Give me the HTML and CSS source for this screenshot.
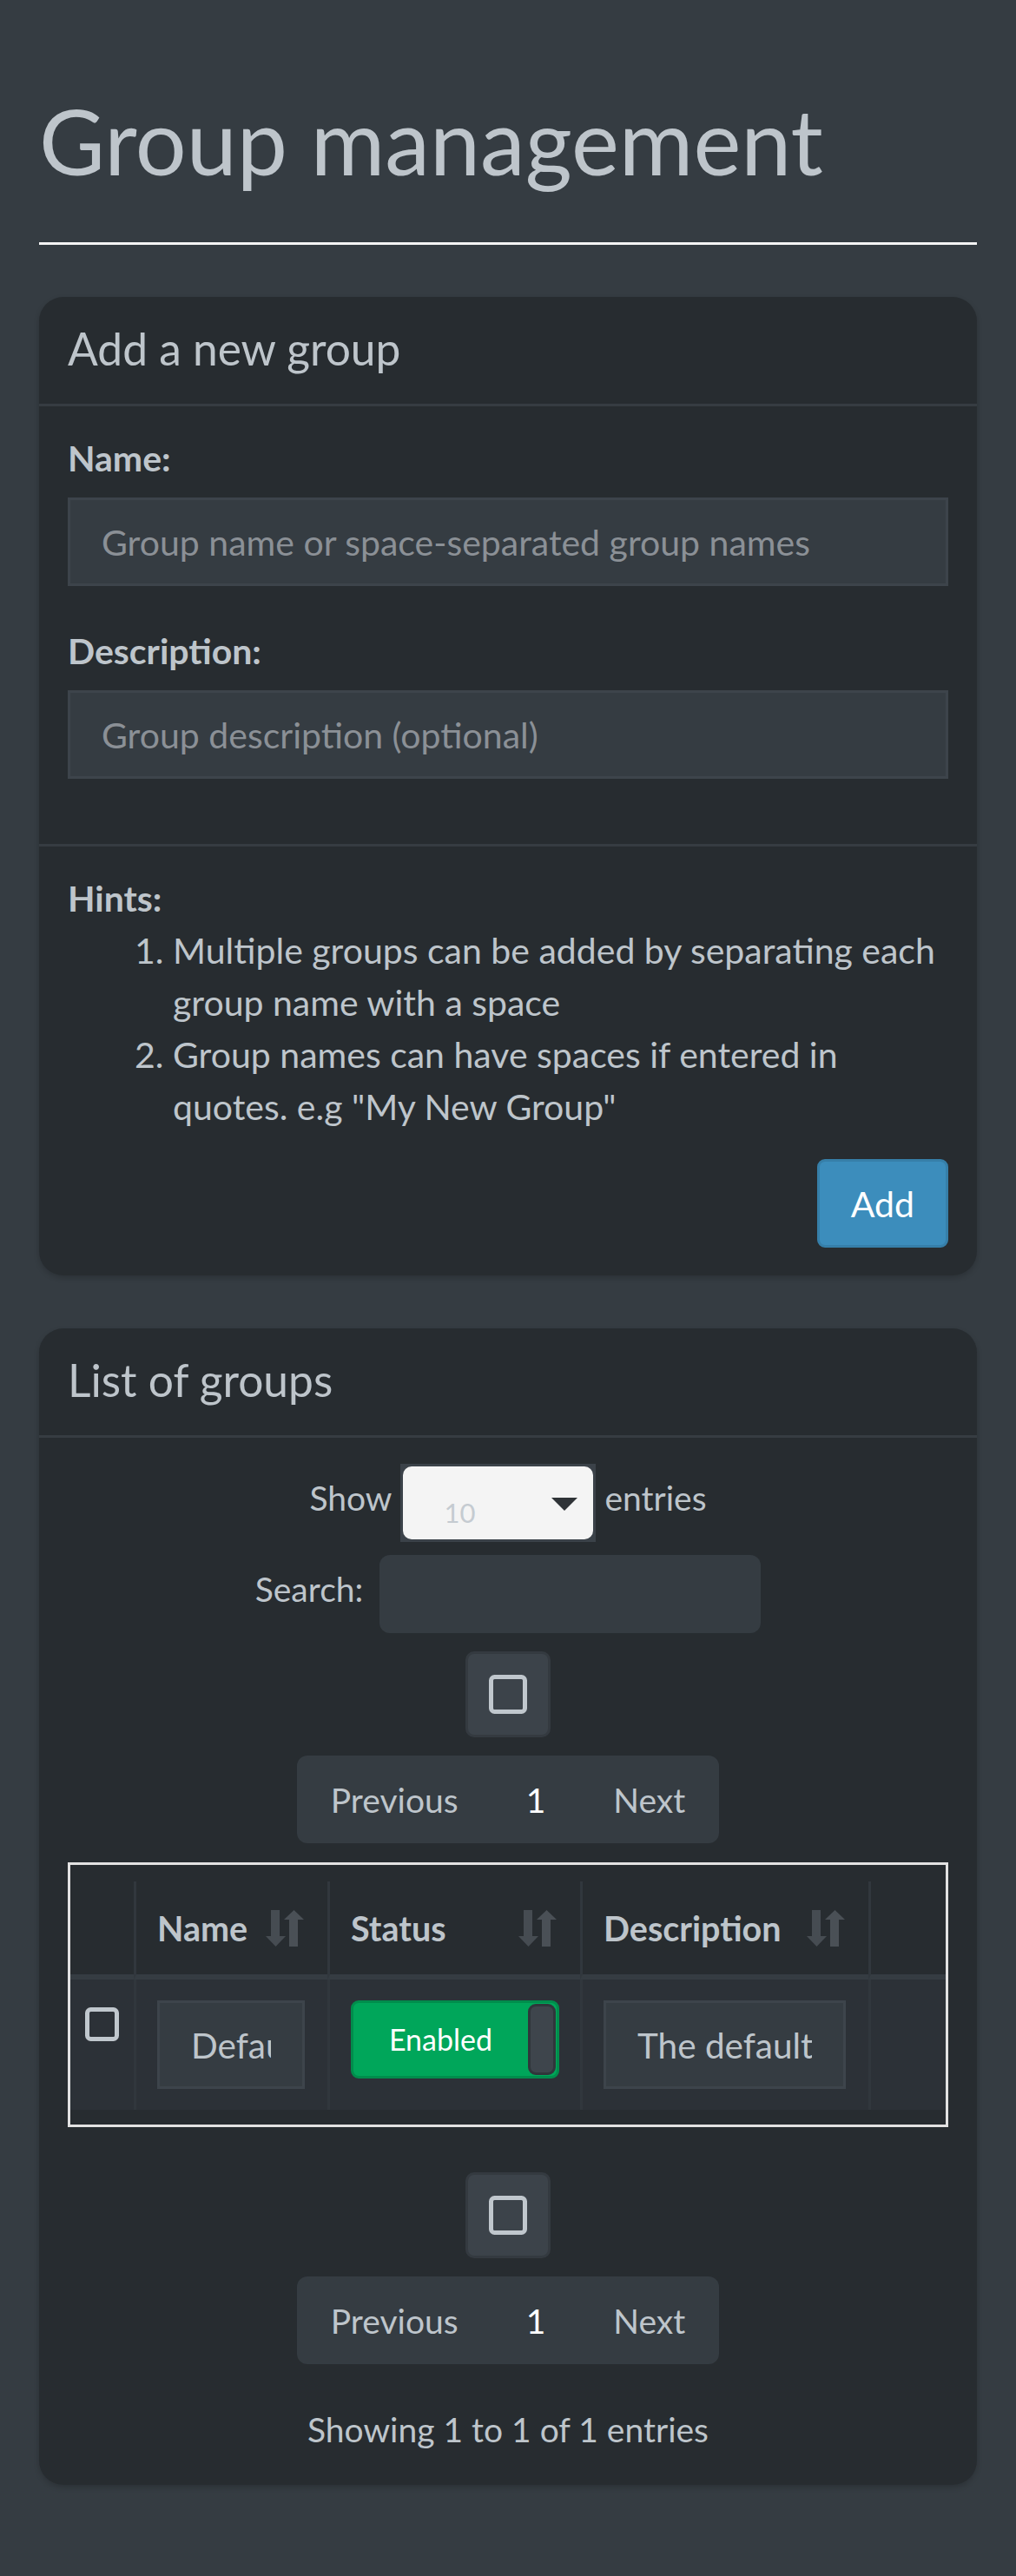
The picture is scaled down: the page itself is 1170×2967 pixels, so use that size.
FILE: index.html
```html
<!DOCTYPE html>
<html lang="en">
<head>
<meta charset="utf-8">
<title>Group management</title>
<link rel="stylesheet" href="styles.css">
</head>
<body>
<div class="page">
  <h1 class="page-title">Group management</h1>
  <hr class="title-rule">

  <section class="box">
    <div class="box-header"><h3 class="box-title">Add a new group</h3></div>
    <div class="form-body">
      <div class="form-group">
        <label class="field-label" for="new_name">Name:</label>
        <input id="new_name" class="text-input" type="text" placeholder="Group name or space-separated group names">
      </div>
      <div class="form-group">
        <label class="field-label" for="new_desc">Description:</label>
        <input id="new_desc" class="text-input" type="text" placeholder="Group description (optional)">
      </div>
    </div>
    <div class="box-footer">
      <div class="hints-title">Hints:</div>
      <ol class="hints-list">
        <li>Multiple groups can be added by separating each group name with a space</li>
        <li>Group names can have spaces if entered in quotes. e.g "My New Group"</li>
      </ol>
      <div class="footer-actions"><button class="btn-add" type="button">Add</button></div>
    </div>
  </section>

  <section class="box box-list">
    <div class="box-header"><h3 class="box-title">List of groups</h3></div>
    <div class="list-body">
      <div class="length-row">
        <span class="row-label">Show</span>
        <div class="select-box"><div class="select-inner"><span class="select-value">10</span><span class="select-arrow"></span></div></div>
        <span class="row-label">entries</span>
      </div>
      <div class="search-row">
        <span class="row-label">Search:</span>
        <input class="search-input" type="search">
      </div>
      <div class="check-btn">
        <svg class="check-icon" width="44" height="45" viewBox="0 0 44 45"><rect x="2.5" y="2.5" width="39" height="40" rx="4" fill="none" stroke="#c0c7cd" stroke-width="5"/></svg>
      </div>
      <div class="pager">
        <span class="page-link">Previous</span>
        <span class="page-link current">1</span>
        <span class="page-link">Next</span>
      </div>

      <div class="table-wrap">
        <table class="groups-table">
          <thead>
            <tr>
              <th class="col-check"></th>
              <th class="col-name"><div class="th-inner"><span>Name</span>
                <svg class="sort-icon" width="46" height="44" viewBox="0 0 46 44"><rect x="7" y="1" width="10" height="32" fill="#464c52"/><polygon points="1,31 24,31 12.5,43" fill="#464c52"/><polygon points="22,12 45,12 33.5,1" fill="#4a5056"/><rect x="28" y="11" width="10" height="32" fill="#4a5056"/></svg></div></th>
              <th class="col-status"><div class="th-inner"><span>Status</span>
                <svg class="sort-icon" width="46" height="44" viewBox="0 0 46 44"><rect x="7" y="1" width="10" height="32" fill="#464c52"/><polygon points="1,31 24,31 12.5,43" fill="#464c52"/><polygon points="22,12 45,12 33.5,1" fill="#4a5056"/><rect x="28" y="11" width="10" height="32" fill="#4a5056"/></svg></div></th>
              <th class="col-desc"><div class="th-inner"><span>Description</span>
                <svg class="sort-icon" width="46" height="44" viewBox="0 0 46 44"><rect x="7" y="1" width="10" height="32" fill="#464c52"/><polygon points="1,31 24,31 12.5,43" fill="#464c52"/><polygon points="22,12 45,12 33.5,1" fill="#4a5056"/><rect x="28" y="11" width="10" height="32" fill="#4a5056"/></svg></div></th>
              <th class="col-action"></th>
            </tr>
          </thead>
          <tbody>
            <tr>
              <td class="cell-check"><svg width="39" height="39" viewBox="0 0 39 39"><rect x="2.5" y="2.5" width="34" height="34" rx="4" fill="none" stroke="#c0c7cd" stroke-width="5"/></svg></td>
              <td><input class="cell-input" type="text" value="Default"></td>
              <td><div class="toggle"><span class="toggle-label">Enabled</span><span class="toggle-handle"></span></div></td>
              <td><input class="cell-input" type="text" value="The default group"></td>
              <td></td>
            </tr>
          </tbody>
        </table>
      </div>

      <div class="check-btn check-btn-bottom">
        <svg class="check-icon" width="44" height="45" viewBox="0 0 44 45"><rect x="2.5" y="2.5" width="39" height="40" rx="4" fill="none" stroke="#c0c7cd" stroke-width="5"/></svg>
      </div>
      <div class="pager">
        <span class="page-link">Previous</span>
        <span class="page-link current">1</span>
        <span class="page-link">Next</span>
      </div>
      <div class="info">Showing 1 to 1 of 1 entries</div>
    </div>
  </section>
</div>
</body>
</html>
```

FILE: styles.css
```css
* { box-sizing: border-box; }
html, body { margin: 0; padding: 0; }
body {
  background: #353c42;
  color: #bec5cb;
  font-family: Lato, "Noto Sans", sans-serif;
  font-size: 39px;
  line-height: 60px;
}
.page { padding: 0 45px 105px; }
.page-title {
  margin: 0;
  padding-top: 102px;
  font-size: 104px;
  line-height: 120px;
  font-weight: 400;
  color: #bec5cb;
}
.title-rule {
  margin: 57px 0 0;
  height: 0;
  border: 0;
  border-top: 3px solid #f4f4f4;
}
.box {
  margin-top: 60px;
  background: #272c30;
  border-radius: 28px;
  box-shadow: 0 3px 6px rgba(0, 0, 0, 0.18);
}
.box-list { margin-top: 61px; }
.box-header {
  padding: 29px 33px 34px;
  border-bottom: 3px solid #363c42;
}
.box-title {
  margin: 0;
  font-size: 51.5px;
  line-height: 60px;
  font-weight: 400;
}
.form-body { padding: 30px 33px 30px; font-size: 41px; }
.form-group { margin-bottom: 45px; }
.field-label {
  display: block;
  font-weight: 700;
  margin-bottom: 15px;
}
.text-input {
  display: block;
  width: 100%;
  height: 102px;
  padding: 0 36px;
  border: 3px solid #3d444b;
  border-radius: 0;
  background: #353c42;
  color: #bec5cb;
  font-family: inherit;
  font-size: 41px;
  outline: none;
}
.text-input::placeholder { color: #8b9096; opacity: 1; }
.box-footer {
  padding: 30px 33px 32px;
  border-top: 3px solid #363c42;
  font-size: 41px;
}
.hints-title { font-weight: 700; }
.hints-list { margin: 0; padding-left: 121px; }
.footer-actions {
  display: flex;
  justify-content: flex-end;
  margin-top: 30px;
}
.btn-add {
  height: 102px;
  padding: 0 36px;
  background: #3c8dbc;
  border: 3px solid #367fa9;
  border-radius: 9px;
  color: #fff;
  font-family: inherit;
  font-size: 41px;
}

.list-body {
  padding: 30px 33px 34px;
  display: flex;
  flex-direction: column;
  align-items: center;
}
.length-row, .search-row {
  display: flex;
  align-items: flex-start;
}
.length-row { gap: 10px; }
.search-row { gap: 19px; margin-top: 15px; }
.row-label { margin-top: 9px; }
.select-box {
  width: 225px;
  height: 90px;
  padding: 3px;
  background: #3b4249;
}
.select-inner {
  display: flex;
  height: 100%;
  padding: 0 18px 0 47px;
  background: #f4f4f4;
  border-radius: 10px;
}
.select-value {
  align-self: flex-end;
  margin-bottom: 15px;
  font-size: 31px;
  line-height: 31px;
  color: #c5cbd1;
}
.select-arrow {
  align-self: flex-start;
  margin-top: 36px;
  margin-left: auto;
  width: 0;
  height: 0;
  border-left: 15px solid transparent;
  border-right: 15px solid transparent;
  border-top: 15px solid #2f3337;
}
.search-input {
  width: 439px;
  height: 90px;
  border: 0;
  border-radius: 12px;
  background: #353c42;
  color: #bec5cb;
  font-family: inherit;
  font-size: 39px;
  outline: none;
}
.check-btn {
  display: flex;
  align-items: center;
  justify-content: center;
  width: 98px;
  height: 99px;
  margin-top: 21px;
  background: #3c434a;
  border: 3px solid #343a40;
  border-radius: 10px;
}
.check-btn-bottom { margin-top: 52px; }
.pager {
  display: flex;
  align-items: center;
  height: 101px;
  margin-top: 21px;
  background: #353c42;
  border-radius: 12px;
}
.page-link { padding: 0 39px; }
.page-link.current { color: #fff; }

.table-wrap {
  align-self: stretch;
  margin-top: 22px;
  padding: 19px 0 17px;
  border: 3px solid #e2e2e2;
  overflow: hidden;
}
.groups-table {
  width: 1039px;
  table-layout: fixed;
  border-collapse: separate;
  border-spacing: 0;
}
.groups-table th {
  padding: 0 26px 0 24px;
  text-align: left;
  font-weight: 700;
  font-size: 39.5px;
  border-bottom: 6px solid #353c42;
}
.groups-table th + th,
.groups-table td + td { border-left: 3px solid #31373d; }
.col-check { width: 73px; }
.col-name { width: 223px; }
.col-status { width: 291px; }
.col-desc { width: 332px; }
.col-action { width: 120px; }
.th-inner {
  display: flex;
  align-items: center;
  justify-content: space-between;
  height: 107px;
}
.sort-icon { flex: none; }
.groups-table tbody tr { background: #2c3137; }
.groups-table td {
  padding: 24px 26px 24px 24px;
  vertical-align: top;
}
.groups-table td.cell-check {
  padding: 32px 0 0;
  text-align: center;
}
.cell-check svg { display: block; margin: 0 auto; }
.cell-input {
  display: block;
  width: 100%;
  height: 102px;
  padding: 0 36px;
  border: 3px solid #3d444b;
  background: #353c42;
  color: #bec5cb;
  font-family: inherit;
  font-size: 40.5px;
  outline: none;
}
.toggle {
  display: flex;
  width: 240px;
  height: 90px;
  background: #00a65a;
  border: 3px solid #008d4c;
  border-radius: 9px;
  overflow: hidden;
}
.toggle-label {
  flex: 1;
  display: flex;
  align-items: center;
  justify-content: center;
  color: #fff;
  font-size: 34px;
}
.toggle-handle {
  width: 32px;
  margin: 1px 1px 1px 0;
  background: #3e454c;
  border: 3px solid #30363b;
  border-radius: 9px;
}
.info { margin-top: 45px; }
```
